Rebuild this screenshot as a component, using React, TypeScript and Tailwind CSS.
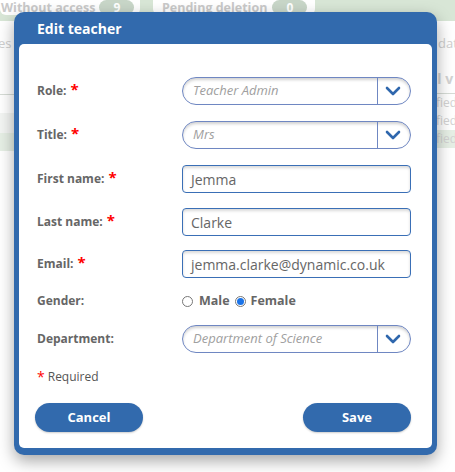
import React from "react";

const font = { fontFamily: '"Open Sans", "Noto Sans", sans-serif' };

function Chevron() {
  return (
    <svg width="16" height="10" viewBox="0 0 16 10" fill="none">
      <path d="M2 2 L8 8 L14 2" stroke="#2f67ad" strokeWidth="2.6" strokeLinecap="round" strokeLinejoin="round" />
    </svg>
  );
}

function Select({ value }: { value: string }) {
  return (
    <div className="flex h-[28px] w-[229px] items-stretch rounded-full border border-[#6f87c2] bg-white shadow-[inset_0_2px_3px_rgba(0,0,0,0.18)]">
      <div className="flex flex-1 items-center pl-[10px] text-[13px] italic text-[#a0a0a0]">{value}</div>
      <div className="flex w-[33px] items-center justify-center border-l border-[#6f87c2] pr-[2px]">
        <Chevron />
      </div>
    </div>
  );
}

function Input({ value }: { value: string }) {
  return (
    <div className="flex h-[28px] w-[229px] items-center rounded-[4px] border border-[#3a6fb6] bg-white pl-[8px] text-[14px] text-[#666] shadow-[inset_0_2px_3px_rgba(0,0,0,0.15)]">
      {value}
    </div>
  );
}

function Label({ text, req }: { text: string; req?: boolean }) {
  return (
    <div className="w-[145px] text-[12px] font-bold text-[#666]">
      {text}
      {req && <span className="ml-[4px] text-[15px] leading-none text-[#ff0000]">*</span>}
    </div>
  );
}

function Radio({ checked }: { checked?: boolean }) {
  return (
    <span className="flex h-[11px] w-[11px] items-center justify-center rounded-full border border-[#777] bg-white">
      {checked && <span className="h-[7px] w-[7px] rounded-full bg-[#1a73e8]" />}
    </span>
  );
}

export default function App() {
  return (
    <div className="relative h-[472px] w-[455px] overflow-hidden bg-white" style={font}>
      {/* background page */}
      <div className="flex h-[21px] items-start whitespace-nowrap bg-[#d8e6d6]">
        <div className="flex h-[15px] w-[140px] shrink-0 items-center rounded-b-[6px] bg-white">
          <span className="ml-[1px] text-[12.5px] font-bold leading-[14px] text-[#c9c9c9]">Without access</span>
          <span className="ml-[4px] flex h-[15px] w-[35px] items-center justify-center rounded-full bg-[#c8d6c8] text-[12px] font-bold text-white">9</span>
        </div>
        <div className="ml-[13px] flex h-[15px] w-[162px] shrink-0 items-center rounded-b-[6px] bg-white">
          <span className="ml-[9px] text-[12.5px] font-bold leading-[14px] text-[#c9c9c9]">Pending deletion</span>
          <span className="ml-[5px] flex h-[15px] w-[35px] items-center justify-center rounded-full bg-[#c8d6c8] text-[12px] font-bold text-white">0</span>
        </div>
      </div>
      <div className="flex justify-between pt-[13px] text-[13px] text-[#cfcfcf]">
        <span className="-ml-[2px]">es</span>
        <span className="-mr-[10px]">data</span>
      </div>
      <div className="flex justify-between">
        <div className="mt-[40px] w-[20px]">
          <div className="h-[1px] bg-[#d6dcd6]" />
          <div className="mt-[18px] h-[20px] bg-[#f3f5f3]" />
          <div className="h-[18px] bg-[#e6efe5]" />
        </div>
        <div className="mt-[14px] w-[22px] whitespace-nowrap text-[12px] text-[#d3d3d3]">
          <div className="pb-[4px] text-[14px] font-bold">il v</div>
          <div className="h-[1px] bg-[#d6dcd6]" />
          <div className="h-[18px] leading-[18px]">ified</div>
          <div className="h-[18px] leading-[18px]">ified</div>
          <div className="h-[18px] bg-[#e6efe5] leading-[18px]">ified</div>
        </div>
      </div>

      {/* modal */}
      <div className="absolute left-[14px] top-[12px] w-[423px] rounded-[10px] bg-[#326aad] px-[5px] pb-[7px] shadow-[0_6px_16px_rgba(0,0,0,0.35)]">
        <div className="flex h-[32px] items-center pl-[18px] text-[14px] font-bold text-white">Edit teacher</div>
        <div className="flex flex-col rounded-[5px] bg-white pl-[18px] pr-[21px] pt-[33px] pb-[16px]">
          <div className="flex items-center">
            <Label text="Role:" req />
            <Select value="Teacher Admin" />
          </div>
          <div className="mt-[16px] flex items-center">
            <Label text="Title:" req />
            <Select value="Mrs" />
          </div>
          <div className="mt-[16px] flex items-center">
            <Label text="First name:" req />
            <Input value="Jemma" />
          </div>
          <div className="mt-[15px] flex items-center">
            <Label text="Last name:" req />
            <Input value="Clarke" />
          </div>
          <div className="mt-[14px] flex items-center">
            <Label text="Email:" req />
            <Input value="jemma.clarke@dynamic.co.uk" />
          </div>
          <div className="mt-[15px] flex h-[16px] items-center">
            <Label text="Gender:" />
            <div className="flex items-center text-[12.5px] font-bold text-[#666]">
              <Radio />
              <span className="ml-[6px]">Male</span>
              <span className="ml-[5px]"><Radio checked /></span>
              <span className="ml-[5px]">Female</span>
            </div>
          </div>
          <div className="mt-[16px] flex items-center">
            <Label text="Department:" />
            <Select value="Department of Science" />
          </div>
          <div className="mt-[15px] flex items-center text-[12px] text-[#555]">
            <span className="text-[14px] leading-none text-[#ff0000]">*</span>
            <span className="ml-[3px]">Required</span>
          </div>
          <div className="-ml-[2px] mt-[17px] flex justify-between">
            <button className="flex h-[29px] w-[108px] items-center justify-center rounded-full bg-[#326aad] text-[13px] font-bold text-white shadow-[0_1px_2px_rgba(0,0,0,0.2)]">Cancel</button>
            <button className="flex h-[29px] w-[108px] items-center justify-center rounded-full bg-[#326aad] text-[13px] font-bold text-white shadow-[0_1px_2px_rgba(0,0,0,0.2)]">Save</button>
          </div>
        </div>
      </div>
    </div>
  );
}
